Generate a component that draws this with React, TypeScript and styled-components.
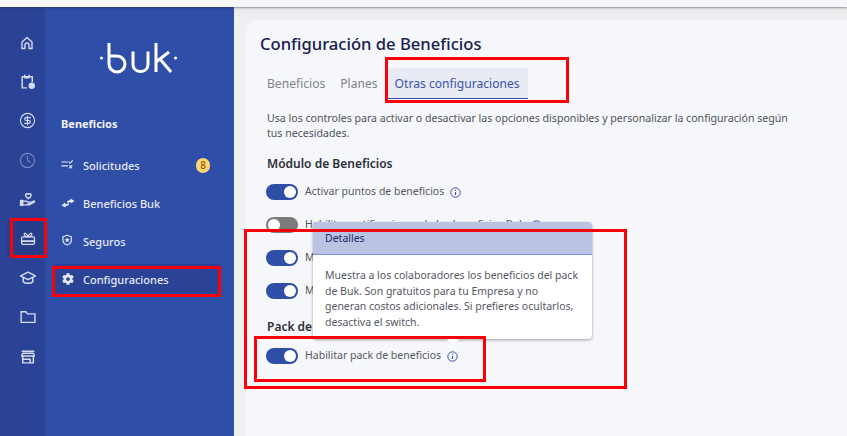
import type { ReactNode } from "react";
import styled, { createGlobalStyle } from "styled-components";
import { CircleDollarSign, Clock } from "lucide-react";
import { FaCog } from "react-icons/fa";

const GlobalStyle = createGlobalStyle`
  html, body {
    margin: 0;
    padding: 0;
    background: #eceef0;
    font-family: "Noto Sans", "Open Sans", sans-serif;
    overflow: hidden;
  }
`;

const Screen = styled.div`
  position: relative;
  width: 847px;
  height: 436px;
  overflow: hidden;
`;

const TopBar = styled.div`
  height: 7px;
  background: #f6f7f9;
  box-shadow: 0 1px 2px rgba(40, 40, 50, 0.45);
  position: relative;
  z-index: 2;
`;

const Layout = styled.div`
  display: grid;
  grid-template-columns: 45px 189px 1fr;
  height: 429px;
`;

const Rail = styled.nav`
  background: #2a4396;
  display: flex;
  flex-direction: column;
  padding-top: 16px;
`;

const RailItem = styled.div<{ $active?: boolean; $dim?: boolean }>`
  height: 39.2px;
  display: flex;
  align-items: center;
  justify-content: center;
  padding-left: ${(p) => (p.$active ? "3px" : "9px")};
  margin-left: ${(p) => (p.$active ? "6px" : "0")};
  border-radius: 8px 0 0 8px;
  background: ${(p) => (p.$active ? "#263d8a" : "transparent")};
  color: ${(p) => (p.$dim ? "#7486c0" : "#d5daee")};
`;

const Sidebar = styled.aside`
  background: #2f4ea8;
  display: flex;
  flex-direction: column;
  padding: 0 14px 0 7px;
`;

const LogoBox = styled.div`
  height: 92px;
  display: flex;
  align-items: flex-end;
  justify-content: center;
  padding: 0 0 25px 7px;
  box-sizing: border-box;
`;

const SectionLabel = styled.div`
  color: #f1f3fa;
  font-size: 11px;
  font-weight: 700;
  line-height: 16px;
  padding: 17px 0 0 9px;
  height: 34px;
  box-sizing: border-box;
  margin-bottom: 17px;
`;

const NavItem = styled.div<{ $active?: boolean }>`
  height: 30px;
  margin-bottom: 8px;
  display: flex;
  align-items: center;
  padding: 0 8px;
  gap: 8px;
  border-radius: 3px;
  color: #e6e9f5;
  font-size: 11px;
  font-weight: 500;
  background: ${(p) => (p.$active ? "#2a4396" : "transparent")};
`;

const NavIcon = styled.span`
  display: flex;
  width: 15px;
  justify-content: center;
`;

const Badge = styled.span`
  margin-left: auto;
  margin-right: 2px;
  width: 14px;
  height: 15px;
  border-radius: 7px;
  background: #fbd774;
  color: #a0591a;
  font-size: 10px;
  display: flex;
  align-items: center;
  justify-content: center;
`;

const Main = styled.main`
  grid-column: 3;
  padding: 13px 0 0 12px;
  background: linear-gradient(#e8eaeb, #eef0f2 14px);
`;

const Card = styled.section`
  position: relative;
  height: 420px;
  background: #f6f7fa;
  border-radius: 10px 0 0 0;
  padding: 13px 0 0 14px;
  box-sizing: border-box;
`;

const Title = styled.h1`
  margin: 0 0 13px;
  color: #17204f;
  font-size: 16.6px;
  line-height: 22px;
  font-weight: 500;
`;

const Tabs = styled.div`
  display: flex;
  align-items: stretch;
  height: 31px;
  margin-left: 7px;
  margin-bottom: 12px;
`;

const Tab = styled.div<{ $active?: boolean }>`
  display: flex;
  align-items: center;
  font-size: 12.1px;
  padding: ${(p) => (p.$active ? "0 8px 0 7px" : "0 15px 0 0")};
  margin-left: ${(p) => (p.$active ? "-5px" : "0")};
  color: ${(p) => (p.$active ? "#3b52ad" : "#808389")};
  background: ${(p) => (p.$active ? "#e8eaf4" : "transparent")};
  border-bottom: ${(p) => (p.$active ? "1px solid #2f4ea8" : "1px solid transparent")};
  border-radius: 3px 3px 0 0;
`;

const Description = styled.p`
  margin: 0 0 15px 7px;
  width: 525px;
  color: #4e5159;
  font-size: 10.6px;
  line-height: 15px;
`;

const SectionTitle = styled.h2<{ $gap?: boolean }>`
  margin: ${(p) => (p.$gap ? "20px" : "0")} 0 ${(p) => (p.$gap ? "13px" : "12px")} 7px;
  font-size: 12px;
  line-height: 16px;
  font-weight: 600;
  color: #2d2f38;
`;

const Row = styled.div`
  display: flex;
  align-items: center;
  height: 16px;
  margin: 0 0 17px 6px;
  gap: 7px;
  color: #55585f;
  font-size: 10.5px;
`;

const RowLabel = styled.span`
  margin-top: -2px;
`;

const Rows = styled.div`
  & > ${Row}:last-child {
    margin-bottom: 0;
  }
`;

const Track = styled.span<{ $on: boolean }>`
  position: relative;
  width: 32px;
  height: 16px;
  border-radius: 8px;
  background: ${(p) => (p.$on ? "#2f4ea8" : "#7b7b7b")};
  flex-shrink: 0;

  &::after {
    content: "";
    position: absolute;
    top: 2px;
    left: ${(p) => (p.$on ? "18px" : "2px")};
    width: 12px;
    height: 12px;
    border-radius: 50%;
    background: #fff;
  }
`;

const InfoGlyph = styled.svg`
  color: #3b52ad;
  margin-left: -1px;
  flex-shrink: 0;
`;

const Popover = styled.div`
  position: absolute;
  left: 67px;
  top: 202px;
  width: 279px;
  background: #fff;
  border-radius: 4px;
  box-shadow: 0 1px 3px rgba(30, 30, 40, 0.4);

  &::after {
    content: "";
    position: absolute;
    left: 134px;
    bottom: -6px;
    border-left: 6px solid transparent;
    border-right: 6px solid transparent;
    border-top: 6px solid #fff;
  }
`;

const PopoverHead = styled.div`
  height: 33px;
  background: #bac4e2;
  border-bottom: 1px solid #7f96d4;
  border-radius: 4px 4px 0 0;
  box-sizing: border-box;
  padding: 8px 12px 0;
  color: #1d2a6b;
  font-size: 10.5px;
  line-height: 16px;
`;

const PopoverBody = styled.div`
  padding: 13px 12px 8px;
  color: #55585f;
  font-size: 10.5px;
  line-height: 15.7px;
`;

const Mark = styled.div`
  position: absolute;
  border: 3px solid #fb0007;
  box-sizing: border-box;
  pointer-events: none;
  z-index: 5;
`;

const MarkRail = styled(Mark)`
  left: 10px;
  top: 218px;
  width: 37px;
  height: 40px;
`;

const MarkConfig = styled(Mark)`
  left: 52px;
  top: 266px;
  width: 169px;
  height: 31px;
`;

const MarkTabs = styled(Mark)`
  left: 385px;
  top: 57px;
  width: 184px;
  height: 46px;
`;

const MarkPanel = styled(Mark)`
  left: 244px;
  top: 229px;
  width: 383px;
  height: 160px;
`;

const MarkPack = styled(Mark)`
  left: 254px;
  top: 336px;
  width: 232px;
  height: 46px;
`;

const Glyph = ({ size = 16, children }: { size?: number; children: ReactNode }) => (
  <svg
    width={size}
    height={size}
    viewBox="0 0 16 16"
    fill="none"
    stroke="currentColor"
    strokeWidth="1.4"
    strokeLinecap="round"
    strokeLinejoin="round"
  >
    {children}
  </svg>
);

const HomeIcon = () => (
  <Glyph>
    <path d="M3 7l5-4.5L13 7v6.5h-3V10a2 2 0 0 0-4 0v3.500H3z" />
  </Glyph>
);

const CalendarIcon = () => (
  <Glyph size={17}>
    <path d="M7 14H3V3.500h9.500V8" />
    <path d="M5.500 2v2.500h4V2" />
    <circle cx="12" cy="12" r="3" fill="currentColor" stroke="none" />
  </Glyph>
);

const HandHeartIcon = () => (
  <Glyph size={17}>
    <path d="M8.800 7.200C7 6 6.200 5.200 6.200 4a1.400 1.400 0 0 1 2.600-.8 1.400 1.400 0 0 1 2.600.8c0 1.200-.8 2-2.600 3.200z" />
    <path d="M1.500 9v4.500h2V9z" fill="currentColor" />
    <path d="M3.500 9.500h3l2 1h2a.8.8 0 0 1 0 1.700H8M3.500 13h6l5-2.500c.6-.6 0-1.300-.8-1L10.500 10.800" strokeWidth="1.200" />
  </Glyph>
);

const GiftBoxIcon = () => (
  <Glyph size={17}>
    <rect x="2.500" y="6.500" width="12" height="7" rx="1" strokeWidth="1.200" />
    <path d="M2.500 10.500h12" strokeWidth="1.800" />
    <path d="M8.500 6.500C7.500 3 5 2.200 4.800 3.800 4.700 5.500 7 6.500 8.500 6.500zM8.500 6.500C9.500 3 12 2.200 12.200 3.800 12.300 5.500 10 6.500 8.500 6.500z" strokeWidth="1.100" />
  </Glyph>
);

const CapIcon = () => (
  <Glyph size={17}>
    <path d="M8.500 3L1.500 6.500l7 3.500 7-3.500z" />
    <path d="M4 8.500V12c1.500 2 7.500 2 9 0V8.500" />
  </Glyph>
);

const FolderIcon = () => (
  <Glyph size={17}>
    <path d="M2 3.500h4.500l1.500 2h7v8H2z" strokeWidth="1.300" strokeLinejoin="miter" />
  </Glyph>
);

const StoreIcon = () => (
  <Glyph size={17}>
    <path d="M3 3h11" />
    <path d="M2.500 7.500L3.500 5h10l1 2.500z" />
    <path d="M3.500 8v6h10V8M3.500 10.500h7V14" />
  </Glyph>
);

const RequestsIcon = () => (
  <Glyph size={14}>
    <path d="M1 4.500h6.500M1 9h6.500" strokeWidth="1.200" />
    <path d="M9 4.500l1.500 1.500 2.500-3M9.500 8.500l3 3M12.500 8.500l-3 3" strokeWidth="1.200" />
  </Glyph>
);

const SwapIcon = () => (
  <svg width="14" height="14" viewBox="0 0 14 14" fill="currentColor">
    <path d="M9.500 2.500L13.500 5 9.800 7.500 9.600 6 6.500 7 6 5l3.200-1z" />
    <path d="M4.500 11.500L.5 9.500l3.500-3 .3 1.700L7.500 7.300 8 9.200 4.900 10z" />
  </svg>
);

const ShieldIcon = () => (
  <Glyph size={14}>
    <path d="M7 1.500l4.800 1.700v4c0 2.800-2.300 4.500-4.800 5.300-2.500-.8-4.800-2.500-4.800-5.300v-4z" strokeWidth="1.300" />
    <path
      d="M7 3.900l.9 1.900 2 .2-1.500 1.400.4 2L7 8.400l-1.800 1 .4-2L4.100 6l2-.2z"
      fill="currentColor"
      stroke="none"
    />
  </Glyph>
);

const InfoIcon = () => (
  <InfoGlyph width="11" height="11" viewBox="0 0 11 11" fill="none" stroke="currentColor">
    <circle cx="5.500" cy="5.500" r="4.700" strokeWidth="1" />
    <path d="M5.500 5v3" strokeWidth="1.200" />
    <path d="M5.500 2.700v1.100" strokeWidth="1.200" />
  </InfoGlyph>
);

const BukLogo = () => (
  <svg width="82" height="32" viewBox="0 0 82 32" fill="none" stroke="#fff" strokeWidth="3">
    <circle cx="2.500" cy="16" r="1.600" fill="#fff" stroke="none" />
    <circle cx="76.500" cy="16" r="1.600" fill="#fff" stroke="none" />
    <path d="M10 1v21a8 8 0 0 0 8 8h0a8 8 0 0 0 0-16h-8" />
    <path d="M34 9.500v13a7 7 0 0 0 7 7h1a7 7 0 0 0 7-7v-13" />
    <path d="M57 1v29M57 20l13-10M61 17l11 13" />
  </svg>
);

const railIcons = [
  { icon: <HomeIcon /> },
  { icon: <CalendarIcon /> },
  { icon: <CircleDollarSign size={17} strokeWidth={1.6} /> },
  { icon: <Clock size={17} strokeWidth={1.6} />, dim: true },
  { icon: <HandHeartIcon /> },
  { icon: <GiftBoxIcon />, active: true },
  { icon: <CapIcon /> },
  { icon: <FolderIcon /> },
  { icon: <StoreIcon /> },
];

const App = () => {
  return (
    <Screen>
      <GlobalStyle />
      <TopBar />
      <Layout>
        <Rail>
          {railIcons.map(({ icon, dim, active }, i) => (
            <RailItem key={i} $dim={dim} $active={active}>
              {icon}
            </RailItem>
          ))}
        </Rail>
        <Sidebar>
          <LogoBox>
            <BukLogo />
          </LogoBox>
          <SectionLabel>Beneficios</SectionLabel>
          <NavItem>
            <NavIcon>
              <RequestsIcon />
            </NavIcon>
            Solicitudes
            <Badge>8</Badge>
          </NavItem>
          <NavItem>
            <NavIcon>
              <SwapIcon />
            </NavIcon>
            Beneficios Buk
          </NavItem>
          <NavItem>
            <NavIcon>
              <ShieldIcon />
            </NavIcon>
            Seguros
          </NavItem>
          <NavItem $active>
            <NavIcon>
              <FaCog size={12} />
            </NavIcon>
            Configuraciones
          </NavItem>
        </Sidebar>
        <Main>
          <Card>
            <Title>Configuración de Beneficios</Title>
            <Tabs>
              <Tab>Beneficios</Tab>
              <Tab>Planes</Tab>
              <Tab $active>Otras configuraciones</Tab>
            </Tabs>
            <Description>
              Usa los controles para activar o desactivar las opciones disponibles y personalizar la
              configuración según tus necesidades.
            </Description>
            <SectionTitle>Módulo de Beneficios</SectionTitle>
            <Rows>
              <Row>
                <Track $on />
                <RowLabel>Activar puntos de beneficios</RowLabel>
                <InfoIcon />
              </Row>
              <Row>
                <Track $on={false} />
                <RowLabel>Habilitar notificaciones de los beneficios Buk</RowLabel>
                <InfoIcon />
              </Row>
              <Row>
                <Track $on />
                <RowLabel>Mostrar beneficios</RowLabel>
              </Row>
              <Row>
                <Track $on />
                <RowLabel>Mostrar planes</RowLabel>
              </Row>
            </Rows>
            <SectionTitle $gap>Pack de beneficios</SectionTitle>
            <Row>
              <Track $on />
              <RowLabel>Habilitar pack de beneficios</RowLabel>
              <InfoIcon />
            </Row>
            <Popover>
              <PopoverHead>Detalles</PopoverHead>
              <PopoverBody>
                Muestra a los colaboradores los beneficios del pack de Buk. Son gratuitos para tu
                Empresa y no generan costos adicionales. Si prefieres ocultarlos, desactiva el
                switch.
              </PopoverBody>
            </Popover>
          </Card>
        </Main>
      </Layout>
      <MarkRail />
      <MarkConfig />
      <MarkTabs />
      <MarkPanel />
      <MarkPack />
    </Screen>
  );
};

export default App;
